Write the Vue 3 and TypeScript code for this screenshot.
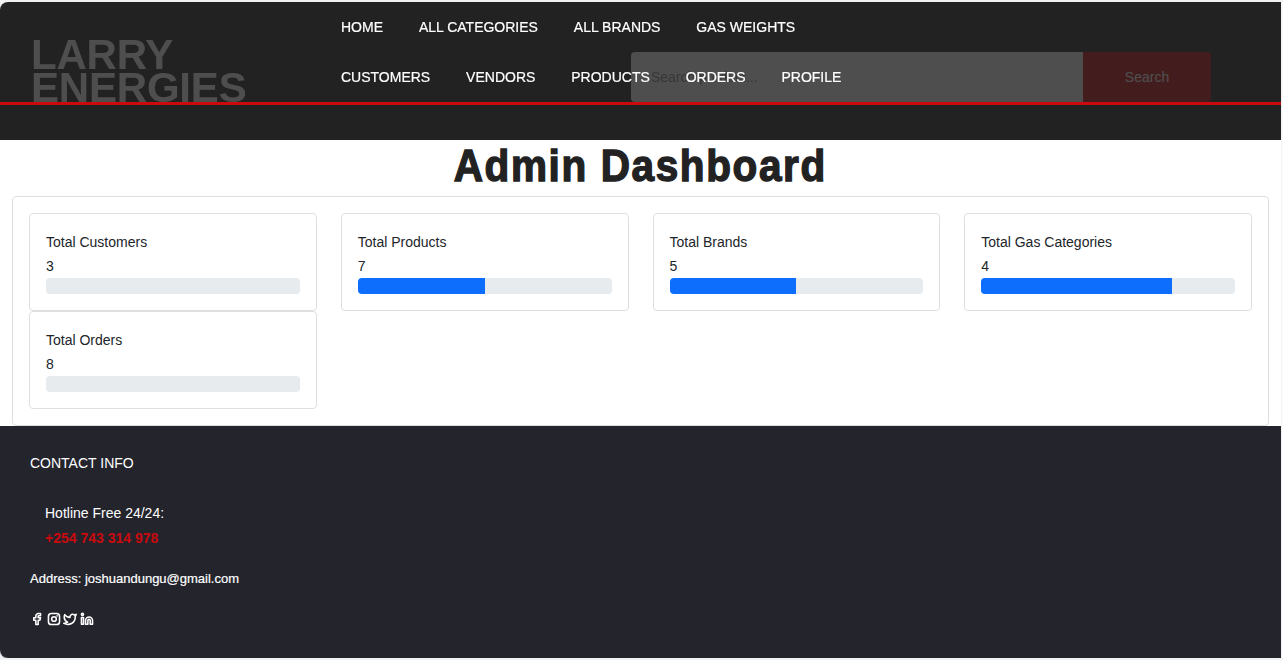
<script setup lang="ts">
interface Stat {
  label: string
  value: number
  percent: number
}

const primaryLinks: string[] = ['HOME', 'ALL CATEGORIES', 'ALL BRANDS', 'GAS WEIGHTS']
const secondaryLinks: string[] = ['CUSTOMERS', 'VENDORS', 'PRODUCTS', 'ORDERS', 'PROFILE']

const stats: Stat[] = [
  { label: 'Total Customers', value: 3, percent: 0 },
  { label: 'Total Products', value: 7, percent: 50 },
  { label: 'Total Brands', value: 5, percent: 50 },
  { label: 'Total Gas Categories', value: 4, percent: 75 },
  { label: 'Total Orders', value: 8, percent: 0 },
]
</script>

<template>
  <div class="page">
    <header class="header">
      <div class="masthead">
        <div class="brand-row">
          <div class="logo">LARRY<br />ENERGIES</div>
          <form class="search" @submit.prevent>
            <input class="search-input" type="text" placeholder="Search product..." />
            <button class="search-button" type="submit">Search</button>
          </form>
        </div>
        <nav class="nav">
          <ul class="nav-row">
            <li v-for="link in primaryLinks" :key="link">{{ link }}</li>
          </ul>
          <ul class="nav-row">
            <li v-for="link in secondaryLinks" :key="link">{{ link }}</li>
          </ul>
        </nav>
      </div>
    </header>

    <main class="main">
      <h1 class="title"><span class="title-text">Admin Dashboard</span></h1>
      <section class="panel">
        <article v-for="stat in stats" :key="stat.label" class="card">
          <p class="card-label">{{ stat.label }}</p>
          <p class="card-value">{{ stat.value }}</p>
          <div class="progress">
            <div class="progress-bar" :style="{ width: stat.percent + '%' }"></div>
          </div>
        </article>
      </section>
    </main>

    <footer class="footer">
      <h2 class="footer-title">CONTACT INFO</h2>
      <div class="hotline">
        <p>Hotline Free 24/24:</p>
        <p class="phone">+254 743 314 978</p>
      </div>
      <p class="address">Address: joshuandungu@gmail.com</p>
      <div class="social">
        <svg viewBox="0 0 24 24"><path d="M18 2.5h-3.5a4.5 4.5 0 0 0-4.5 4.5v3H6.5v4H10v7.500h4V14h3l1-4h-4V7.500a1 1 0 0 1 1-1h3z" /></svg>
        <svg viewBox="0 0 24 24">
          <rect x="2.500" y="2.500" width="19" height="19" rx="5" />
          <circle cx="12" cy="12" r="4" />
          <path d="M17.300 6.700h.01" />
        </svg>
        <svg viewBox="0 0 24 24"><path d="M22.500 4a10.900 10.900 0 0 1-3 1.200 4.400 4.400 0 0 0-7.500 3v1A10.600 10.600 0 0 1 3 4.500s-4 9 5 13a11.600 11.600 0 0 1-6.500 2c9 4.500 19.500 0 19.500-11.500a4.500 4.500 0 0 0-.1-.8A7.700 7.700 0 0 0 22.500 4z" /></svg>
        <svg viewBox="0 0 24 24">
          <path d="M15.500 8.500a6 6 0 0 1 6 6v6.500h-4v-6.500a2 2 0 0 0-4 0V21h-4v-6.500a6 6 0 0 1 6-6z" />
          <rect x="2.500" y="9.500" width="3.500" height="11.500" />
          <circle cx="4.200" cy="4" r="1.800" />
        </svg>
      </div>
    </footer>
  </div>
</template>

<style>
body {
  background: #eff1f3;
  overflow: hidden;
}
</style>

<style scoped>
.page {
  box-sizing: border-box;
  width: 1281px;
  height: 656px;
  margin-top: 2px;
  border-radius: 8px 0 0 8px;
  overflow: hidden;
  background: #fff;
  box-shadow: 0 1px 1px #a9abad, 2px 0 0 #fbfbfb;
  color: #212529;
  font: 14px/24px "Liberation Sans", Arial, sans-serif;
}
p,
ul,
h1,
h2 {
  margin: 0;
  padding: 0;
}
.header {
  height: 138px;
  background: #222;
}
.masthead {
  display: grid;
  height: 100px;
  border-bottom: 3px solid #c90a0e;
}
.brand-row,
.nav {
  grid-area: 1 / 1;
}
.brand-row {
  display: flex;
  justify-content: space-between;
  align-items: flex-end;
  height: 100px;
  box-sizing: border-box;
  padding: 0 70px 0 31px;
  overflow: hidden;
  opacity: 0.2;
}
.logo {
  height: 64px;
  color: #fff;
  font-size: 42px;
  font-weight: 700;
  letter-spacing: -0.2px;
  line-height: 33px;
}
.search {
  display: flex;
  width: 580px;
  height: 50px;
}
.search-input {
  box-sizing: border-box;
  flex: 1;
  min-width: 0;
  padding: 0 20px;
  border: 0;
  border-radius: 4px 0 0 4px;
  background: #fff;
  font: inherit;
}
.search-input::placeholder {
  color: #888;
  opacity: 1;
}
.search-button {
  width: 128px;
  padding: 0;
  border: 0;
  border-radius: 0 4px 4px 0;
  background: #c90a0e;
  color: #fff;
  font: inherit;
}
.nav {
  z-index: 1;
  padding-left: 341px;
  color: #fff;
  -webkit-text-stroke: 0.2px #fff;
}
.nav-row {
  display: flex;
  gap: 35.900px;
  height: 50px;
  line-height: 50px;
  list-style: none;
}
.title {
  height: 56px;
  text-align: center;
  color: #222;
  font: 700 45px/52px "Liberation Sans", Arial, sans-serif;
}
.title-text {
  display: inline-block;
  white-space: nowrap;
  letter-spacing: 1.800px;
  transform: scaleX(0.9);
  -webkit-text-stroke: 1.400px #222;
}
.panel {
  box-sizing: border-box;
  display: grid;
  grid-template-columns: repeat(4, 1fr);
  column-gap: 24px;
  align-content: start;
  height: 230px;
  margin: 0 12px;
  padding: 16px;
  border: 1px solid #dedfe0;
  border-radius: 4px;
}
.card {
  box-sizing: border-box;
  height: 98px;
  padding: 16px;
  border: 1px solid #dedfe0;
  border-radius: 4px;
}
.progress {
  height: 16px;
  border-radius: 4px;
  overflow: hidden;
  background: #e7ebee;
}
.progress-bar {
  height: 100%;
  background: #0d6efd;
}
.footer {
  box-sizing: border-box;
  height: 232px;
  padding: 25px 30px;
  background: #24242d;
  color: #fff;
}
.footer-title {
  font-size: 14px;
  font-weight: 400;
  line-height: 24px;
}
.hotline {
  padding: 26px 15px 0;
  line-height: 25px;
}
.phone {
  color: #c90a0e;
  font-weight: 700;
}
.address {
  margin-top: 16px;
  font-size: 13px;
  line-height: 24px;
  -webkit-text-stroke: 0.2px #fff;
}
.social {
  display: flex;
  gap: 2.500px;
  padding: 21px 0 0;
}
.social svg {
  width: 14px;
  height: 14px;
  fill: none;
  stroke: #fff;
  stroke-width: 2.700;
  stroke-linecap: round;
  stroke-linejoin: round;
}
</style>
